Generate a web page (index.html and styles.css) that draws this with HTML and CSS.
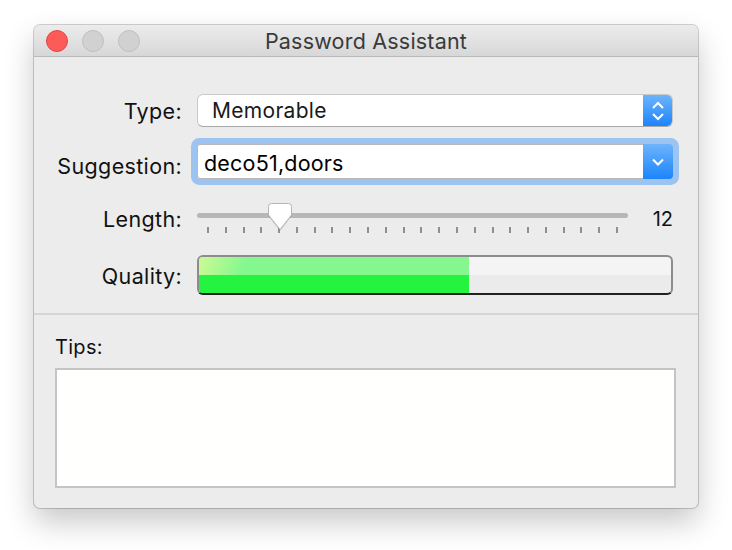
FILE: index.html
```html
<!DOCTYPE html>
<html>
<head>
<meta charset="utf-8">
<link rel="stylesheet" href="styles.css">
</head>
<body>
<div class="window">
  <div class="titlebar">
    <div class="lights">
      <span class="light red"></span>
      <span class="light gray"></span>
      <span class="light gray"></span>
    </div>
    <div class="title">Password Assistant</div>
    <div></div>
  </div>
  <div class="form">
    <div class="row row-type">
      <div class="label">Type:</div>
      <div class="popup">
        <span class="popup-text">Memorable</span>
        <span class="stepper">
          <svg width="14" height="22" viewBox="0 0 14 22"><path d="M2 8 L7 3 L12 8 M2 14 L7 19 L12 14" fill="none" stroke="#fff" stroke-width="2"/></svg>
        </span>
      </div>
    </div>
    <div class="row row-sugg">
      <div class="label label-sugg">Suggestion:</div>
      <div class="combo">
        <span class="combo-text">deco51,doors</span>
        <span class="combo-btn">
          <svg width="14" height="10" viewBox="0 0 14 10"><path d="M2 2.5 L7 7.5 L12 2.5" fill="none" stroke="#fff" stroke-width="2"/></svg>
        </span>
      </div>
    </div>
    <div class="row row-len">
      <div class="label label-len">Length:</div>
      <div class="slider-wrap">
        <div class="slider">
          <div class="track"></div>
          <div class="ticks">
            <i></i><i></i><i></i><i></i><i></i><i></i><i></i><i></i><i></i><i></i><i></i><i></i>
            <i></i><i></i><i></i><i></i><i></i><i></i><i></i><i></i><i></i><i></i><i></i><i></i>
          </div>
          <svg class="thumb" style="left:71px" width="24" height="28" viewBox="0 0 24 28"><path d="M3.5 0.5 H20.5 Q23.5 0.5 23.5 3.5 V12 L12 26.5 L0.5 12 V3.5 Q0.5 0.5 3.5 0.5 Z" fill="#fff" stroke="#b4b4b4" stroke-width="1"/></svg>
        </div>
        <div class="value">12</div>
      </div>
    </div>
    <div class="row row-qual">
      <div class="label label-qual">Quality:</div>
      <div class="meter">
        <div class="meter-fill" style="width:57.2%"></div>
      </div>
    </div>
  </div>
  <div class="tips">
    <div class="tips-label">Tips:</div>
    <div class="tips-box"></div>
  </div>
</div>
</body>
</html>
```

FILE: styles.css
```css
* { box-sizing: border-box; }
html, body { margin: 0; }
body {
  width: 732px;
  height: 550px;
  background: #ffffff;
  padding: 25px 34px 0 34px;
  font-family: Inter, "Liberation Sans", sans-serif;
  overflow: hidden;
}
.window {
  width: 664px;
  height: 483px;
  background: #ececec;
  border-radius: 6px;
  box-shadow: 0 0 0 1px rgba(0,0,0,0.18), 0 14px 30px rgba(0,0,0,0.22);
  display: flex;
  flex-direction: column;
  overflow: hidden;
}
.titlebar {
  height: 32px;
  flex: none;
  background: linear-gradient(#ececec, #d7d7d7);
  border-bottom: 1px solid #bababa;
  display: grid;
  grid-template-columns: 1fr auto 1fr;
  align-items: center;
}
.lights {
  display: flex;
  gap: 14px;
  padding-left: 12px;
}
.light {
  width: 22px;
  height: 22px;
  border-radius: 50%;
  display: block;
}
.light.red { background: #fc5b57; border: 1px solid #df4744; }
.light.gray { background: #d1d1d1; border: 1px solid #bfbfbf; }
.title {
  font-size: 21.5px;
  color: #3a3a3a;
  letter-spacing: 0.2px;
  padding-top: 1px;
}
.form {
  padding: 37px 25px 0 0;
  height: 258px;
  flex: none;
  border-bottom: 2px solid #d6d6d6;
}
.row {
  display: grid;
  grid-template-columns: 148px 1fr;
  column-gap: 15px;
  align-items: center;
}
.label {
  text-align: right;
  font-size: 21.5px;
  letter-spacing: 0.35px;
  color: #111;
}
.label-sugg { padding-top: 9px; }
.label-len { padding-top: 2px; }
.label-qual { padding-top: 2px; }
.row-type { height: 33px; }
.row-sugg { height: 35px; margin-top: 17px; }
.row-len { height: 30px; margin-top: 24px; }
.row-qual { height: 40px; margin-top: 22px; }

.popup {
  height: 33px;
  background: #fff;
  border: 1px solid #c9c9c9;
  border-bottom-color: #a9a9a9;
  border-radius: 6px;
  display: flex;
  align-items: center;
  overflow: hidden;
}
.popup-text {
  flex: 1;
  padding-left: 14px;
  font-size: 21px;
  letter-spacing: 0.3px;
  color: #1a1a1a;
}
.stepper {
  width: 29px;
  align-self: stretch;
  background: linear-gradient(#6db4fb, #1c84fb);
  display: flex;
  align-items: center;
  justify-content: center;
}
.combo {
  height: 35px;
  background: #fff;
  border: 1px solid #b9b9b9;
  border-radius: 3px;
  box-shadow: 0 0 0 6px #9dc3f1;
  display: flex;
  align-items: center;
}
.combo-text {
  flex: 1;
  padding-left: 6px;
  padding-top: 3px;
  font-size: 21.5px;
  letter-spacing: 0.2px;
  color: #000;
}
.combo-btn {
  width: 30px;
  align-self: stretch;
  margin: -1px -1px -1px 0;
  border-radius: 0 4px 4px 0;
  background: linear-gradient(#6db4fb, #1c84fb);
  display: flex;
  align-items: center;
  justify-content: center;
}
.slider-wrap {
  display: flex;
  align-items: flex-start;
  height: 30px;
}
.slider {
  position: relative;
  width: 431px;
  height: 30px;
}
.track {
  margin-top: 10px;
  height: 5px;
  border-radius: 3px;
  background: #b7b7b7;
}
.ticks {
  display: flex;
  justify-content: space-between;
  padding: 0 10px 0 10px;
  margin-top: 9px;
}
.ticks i {
  display: block;
  width: 2px;
  height: 6px;
  background: #8f8f8f;
}
.thumb {
  position: absolute;
  top: 0;
  filter: drop-shadow(0 1px 0.5px rgba(0,0,0,0.12));
}
.value {
  flex: 1;
  text-align: right;
  font-size: 20px;
  color: #111;
  padding-top: 4px;
}
.meter {
  height: 40px;
  border: 2px solid #8c8c8c;
  border-bottom-color: #222;
  border-radius: 6px;
  background: linear-gradient(#f4f4f4 0, #f4f4f4 50%, #ebebeb 50%, #ebebeb 100%);
  overflow: hidden;
}
.meter-fill {
  height: 100%;
  background:
    linear-gradient(110deg, rgba(214,250,150,0.9) 0, rgba(214,250,150,0) 45px) 0 0 / 100% 50% no-repeat,
    linear-gradient(#84f88e 0, #84f88e 50%, #24f440 50%, #24f440 100%);
}
.tips {
  flex: 1;
  display: flex;
  flex-direction: column;
  padding: 20px 22px 20px 21px;
}
.tips-label {
  font-size: 20px;
  letter-spacing: 0.3px;
  color: #111;
  height: 33px;
}
.tips-box {
  flex: 1;
  background: #fffffd;
  border: 2px solid #c4c4c4;
}
```
